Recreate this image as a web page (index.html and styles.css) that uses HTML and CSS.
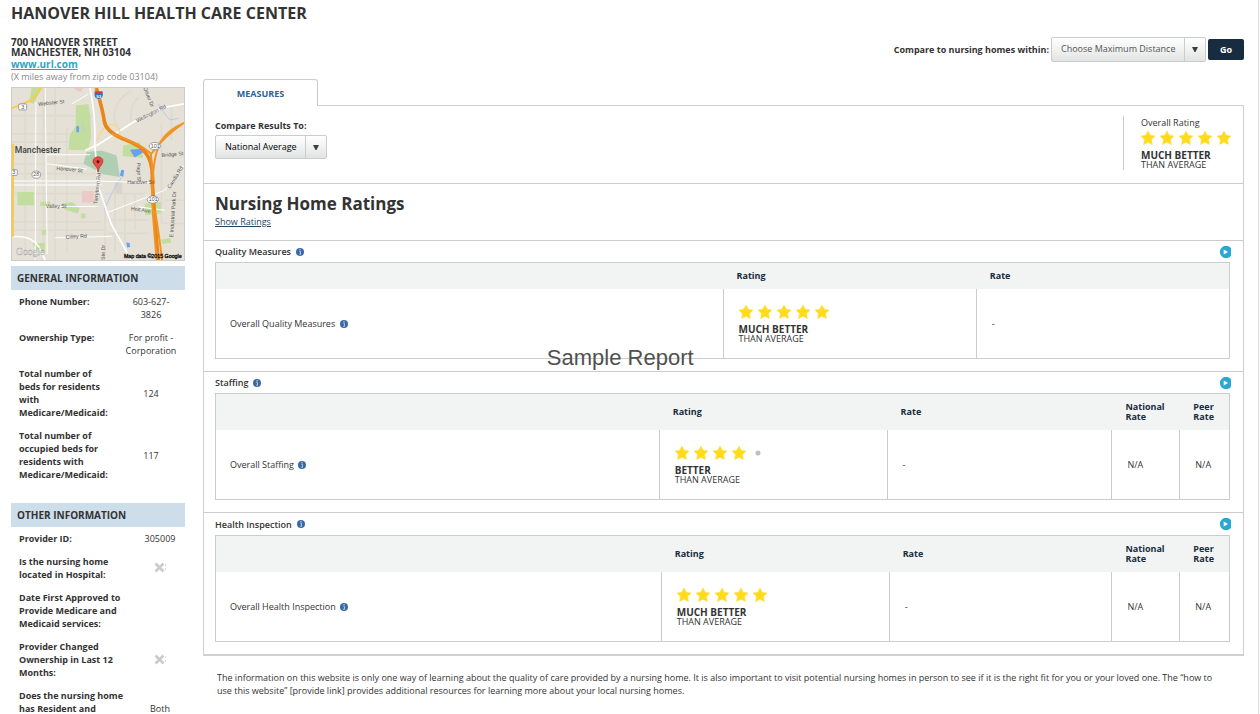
FILE: index.html
```html
<!DOCTYPE html>
<html lang="en">
<head>
<meta charset="utf-8">
<title>Hanover Hill Health Care Center</title>
<link rel="stylesheet" href="styles.css">
</head>
<body>
<svg class="defs" aria-hidden="true">
  <symbol id="star" viewBox="0 0 14 14"><path d="M7 0l2.200 4.200 4.800.8-3.400 3.500.8 5.100L7 11.300l-4.400 2.300.8-5.100L0 5l4.800-.8z" fill="#ffdb1c" stroke="#ffe14a" stroke-width=".6" stroke-linejoin="round"/></symbol>
  <symbol id="dot" viewBox="0 0 14 14"><circle cx="7" cy="7" r="2.500" fill="#bfbfbf"/></symbol>
  <symbol id="info" viewBox="0 0 8 8"><circle cx="4" cy="4" r="4" fill="#3b6aa3"/><path d="M3.200 3.300h1.300v2.700M3 6.200h2" stroke="#c5d8ea" stroke-width=".8" fill="none"/><circle cx="4" cy="1.800" r=".7" fill="#c5d8ea"/></symbol>
  <symbol id="play" viewBox="0 0 12 12"><path d="M12 2.200v7.600A6.200 6.200 0 1 1 12 2.200z" fill="#2aa8d2"/><path d="M4.700 3.500L9 6 4.700 8.500z" fill="#fff"/></symbol>
  <symbol id="cross" viewBox="0 0 12 12"><path d="M1.500 1.500l8 8m0-8l-8 8" stroke="#c9cbcc" stroke-width="2.600"/><path d="M11.500 2v2M11.500 6v2" stroke="#dcdcdc"/></symbol>
  <symbol id="arrow" viewBox="0 0 6 5"><path d="M0 0h6L3.500 5h-1z" fill="#3f3f3f"/></symbol>
</svg>
<div class="page">
  <h1 class="title">HANOVER HILL HEALTH CARE CENTER</h1>
  <div class="columns">
    <aside class="sidebar">
      <address class="address">700 HANOVER STREET<br>MANCHESTER, NH 03104</address>
      <a class="site" href="#">www.url.com</a>
      <p class="miles">(X miles away from zip code 03104)</p>
      <svg class="map" viewBox="20 12 518 518" role="img" aria-label="Map of Manchester">
        <rect x="20" y="12" width="518" height="518" fill="#e5e1d7"/>
        <g fill="none" stroke="#dedacf" stroke-width="5">
          <path d="M115 12v500M150 12v520M185 130v380M60 80v440M20 95h245M20 150h170M20 175h170M20 240h240M20 270h330M20 330h260M20 415h270M20 440h280M300 350v160M330 320v190M360 330v150M390 330v110M300 330h120M310 410h120M310 450h120M470 120v300M500 60v110M380 20q-40 20-50 60t20 60M400 40q-30 30-20 80M480 350h58M470 420h68"/>
        </g>
        <g fill="#c3dd9e">
          <path d="M79 12h32l-27 48-12-6zM212 65l38-5 6 40 2 60-8 40-60-2 4-45 18-25zM36 325h50v40H36zM105 355l30-2 3 13-33 2zM172 360l30-5 22 20-6 15-40-12zM228 390h13v15h-13zM420 360l48-5v35l-46 5zM470 468l26-4 4 14-28 4zM80 480l38-2 2 30h-18zM355 185l50-10 10 48-62-6zM110 440h14v15h-14z"/>
        </g>
        <path d="M245 205l45-5 45 15 10 65-50-8-60-32z" fill="#b0cfb2"/>
        <path d="M208 12h28l-10 12-12-4zM232 322h34v35h-36z" fill="#ebc9c9"/>
        <path d="M330 295h22v34h-25z" fill="#d8d4c9"/>
        <path d="M375 198l35-3 4 12-25 14zM214 126l8 2v17h-8zM349 258l9 2-3 19-10-3zM364 477l10 2 2 12-9 1z" fill="#68a1f4"/>
        <path d="M350 280l-25 40-28 60M232 120l5 28M460 60l20 30 15 18 26-4" fill="none" stroke="#b5caf2" stroke-width="3"/>
        <g fill="none" stroke="#fff">
          <path stroke-width="3" d="M20 292h260l160 6M92 55l-2 475M120 12l6 500M125 213h130M125 240l120 16M20 304h270M120 369h160M150 463l170-4M310 386l170-66 58-75M200 60l50-30M400 370l80 10"/>
          <path stroke-width="5" d="M255 12q18 90 14 170l12 130 38 110 60 108M20 460q60-6 80 30l20 40M240 200l40-18 110-70 90-42 58-10"/>
        </g>
        <path d="M277 170q10-36 34-46 18-6 30 12t-10 30" fill="none" stroke="#f6d899" stroke-width="5"/>
        <path d="M108 12L82 47 20 73M23 180v280" fill="none" stroke="#f7cc4b" stroke-width="6"/>
        <path d="M274 12q20 70 24 100t54 52q60 22 74 48 20 30 16 80l8 110 10 130" fill="none" stroke="#e8861c" stroke-width="11"/>
        <path d="M538 117q-50 22-70 56t-26 130q-2 60 14 227M320 150q90 30 118 60l10 90M538 117q-60 40-100 95M450 380q10 50 22 150" fill="none" stroke="#f29423" stroke-width="6"/>
        <g fill="#fff" stroke="#777" stroke-width="2">
          <rect x="40" y="60" width="24" height="18" rx="4"/><rect x="14" y="258" width="22" height="17" rx="3"/>
          <ellipse cx="93" cy="273" rx="13" ry="11"/><ellipse cx="450" cy="187" rx="17" ry="11"/><ellipse cx="444" cy="348" rx="17" ry="11"/>
        </g>
        <path d="M268 27q13-7 26 0 3 15-13 20-16-5-13-20z" fill="#3872b4" stroke="#fff"/>
        <path d="M269 22h24v6h-24z" fill="#c64040"/>
        <g class="map-labels">
          <text x="48" y="74">3</text><text x="21" y="272">3</text><text x="84" y="278">28</text><text x="438" y="192">101</text><text x="432" y="353">101</text>
          <text class="map-shield" x="274" y="41">93</text>
          <text transform="translate(100 66) rotate(-6)">Webster St</text>
          <text transform="translate(397 116) rotate(-27)">Wellington Rd</text>
          <text transform="translate(415 12) rotate(68)">Oliver Dr</text>
          <text transform="translate(153 259) rotate(5)">Hanover St</text>
          <text x="367" y="301">Hanover St</text><text x="122" y="373">Valley St</text>
          <text transform="translate(182 466) rotate(-3)">Cilley Rd</text>
          <text transform="translate(378 380) rotate(8)">Holt Ave</text>
          <text transform="translate(471 220) rotate(-5)">Bridge St</text>
          <text transform="translate(396 237) rotate(88)">Page St</text>
          <text transform="translate(496 316) rotate(-58)">Candia Rd</text>
          <text transform="translate(505 462) rotate(-86)">E Industrial Park Dr</text>
          <text transform="translate(277 362) rotate(-84)">Tarrytown Rd</text>
          <text transform="translate(299 530) rotate(-88)">Ste Dr</text>
        </g>
        <text class="map-city" x="28" y="209">Manchester</text>
        <text class="map-logo" x="32" y="514">Google</text>
        <text class="map-credit" x="357" y="525">Map data ©2015 Google</text>
        <path d="M279 266q-3-17-10-22-8-9-4-17 5-8 14-8t14 8q3 9-4 17-7 5-10 22z" fill="#e74c43" stroke="#a5271f" stroke-width="2"/>
        <circle cx="279" cy="234" r="4.500" fill="#4d120e"/>
      </svg>
      <h2 class="side-heading">GENERAL INFORMATION</h2>
      <dl class="facts">
        <div class="fact"><dt>Phone Number:</dt><dd>603-627-<br>3826</dd></div>
        <div class="fact"><dt>Ownership Type:</dt><dd>For profit -<br>Corporation</dd></div>
        <div class="fact"><dt>Total number of<br>beds for residents<br>with<br>Medicare/Medicaid:</dt><dd>124</dd></div>
        <div class="fact"><dt>Total number of<br>occupied beds for<br>residents with<br>Medicare/Medicaid:</dt><dd>117</dd></div>
      </dl>
      <h2 class="side-heading">OTHER INFORMATION</h2>
      <dl class="facts facts-other">
        <div class="fact"><dt>Provider ID:</dt><dd>305009</dd></div>
        <div class="fact"><dt>Is the nursing home<br>located in Hospital:</dt><dd><svg class="cross" role="img" aria-label="No"><use href="#cross"/></svg></dd></div>
        <div class="fact"><dt>Date First Approved to<br>Provide Medicare and<br>Medicaid services:</dt><dd></dd></div>
        <div class="fact"><dt>Provider Changed<br>Ownership in Last 12<br>Months:</dt><dd><svg class="cross" role="img" aria-label="No"><use href="#cross"/></svg></dd></div>
        <div class="fact fact-last"><dt>Does the nursing home<br>has Resident and</dt><dd>Both</dd></div>
      </dl>
    </aside>
    <main class="main">
      <form class="distance">
        <label for="distance">Compare to nursing homes within:</label>
        <span class="picker picker-distance">
          <select id="distance"><option>Choose Maximum Distance</option></select>
          <svg class="arrow"><use href="#arrow"/></svg>
        </span>
        <button class="go" type="button">Go</button>
      </form>
      <nav class="tabs"><a class="tab" href="#">MEASURES</a></nav>
      <div class="panel">
        <div class="compare">
          <div class="compare-to">
            <label for="average">Compare Results To:</label>
            <span class="picker">
              <select id="average"><option>National Average</option></select>
              <svg class="arrow"><use href="#arrow"/></svg>
            </span>
          </div>
          <div class="overall">
            <span>Overall Rating</span>
            <div class="stars"><svg><use href="#star"/></svg><svg><use href="#star"/></svg><svg><use href="#star"/></svg><svg><use href="#star"/></svg><svg><use href="#star"/></svg></div>
            <p class="verdict"><strong>MUCH BETTER</strong>THAN AVERAGE</p>
          </div>
        </div>
        <div class="ratings-title">
          <h2>Nursing Home Ratings</h2>
          <a href="#">Show Ratings</a>
        </div>
        <section class="measure">
          <header class="measure-head"><h3>Quality Measures</h3><svg class="info"><use href="#info"/></svg><button class="play" type="button" aria-label="Open Quality Measures"><svg><use href="#play"/></svg></button></header>
          <table class="quality">
            <colgroup><col class="c-name"><col class="c-rating"><col class="c-rate"></colgroup>
            <thead><tr><th></th><th>Rating</th><th>Rate</th></tr></thead>
            <tbody><tr>
              <td>Overall Quality Measures <svg class="info"><use href="#info"/></svg></td>
              <td><div class="stars"><svg><use href="#star"/></svg><svg><use href="#star"/></svg><svg><use href="#star"/></svg><svg><use href="#star"/></svg><svg><use href="#star"/></svg></div><p class="verdict"><strong>MUCH BETTER</strong>THAN AVERAGE</p></td>
              <td>-</td>
            </tr></tbody>
          </table>
          <span class="watermark">Sample Report</span>
        </section>
        <section class="measure">
          <header class="measure-head"><h3>Staffing</h3><svg class="info"><use href="#info"/></svg><button class="play" type="button" aria-label="Open Staffing"><svg><use href="#play"/></svg></button></header>
          <table class="staffing">
            <colgroup><col class="c-name"><col class="c-rating"><col class="c-rate"><col class="c-national"><col class="c-peer"></colgroup>
            <thead><tr><th></th><th>Rating</th><th>Rate</th><th>National<br>Rate</th><th>Peer<br>Rate</th></tr></thead>
            <tbody><tr>
              <td>Overall Staffing <svg class="info"><use href="#info"/></svg></td>
              <td><div class="stars"><svg><use href="#star"/></svg><svg><use href="#star"/></svg><svg><use href="#star"/></svg><svg><use href="#star"/></svg><svg><use href="#dot"/></svg></div><p class="verdict"><strong>BETTER</strong>THAN AVERAGE</p></td>
              <td>-</td><td>N/A</td><td>N/A</td>
            </tr></tbody>
          </table>
        </section>
        <section class="measure">
          <header class="measure-head"><h3>Health Inspection</h3><svg class="info"><use href="#info"/></svg><button class="play" type="button" aria-label="Open Health Inspection"><svg><use href="#play"/></svg></button></header>
          <table class="inspection">
            <colgroup><col class="c-name"><col class="c-rating"><col class="c-rate"><col class="c-national"><col class="c-peer"></colgroup>
            <thead><tr><th></th><th>Rating</th><th>Rate</th><th>National<br>Rate</th><th>Peer<br>Rate</th></tr></thead>
            <tbody><tr>
              <td>Overall Health Inspection <svg class="info"><use href="#info"/></svg></td>
              <td><div class="stars"><svg><use href="#star"/></svg><svg><use href="#star"/></svg><svg><use href="#star"/></svg><svg><use href="#star"/></svg><svg><use href="#star"/></svg></div><p class="verdict"><strong>MUCH BETTER</strong>THAN AVERAGE</p></td>
              <td>-</td><td>N/A</td><td>N/A</td>
            </tr></tbody>
          </table>
        </section>
      </div>
      <p class="note">The information on this website is only one way of learning about the quality of care provided by a nursing home. It is also important to visit potential nursing homes in person to see if it is the right fit for you or your loved one. The “how to use this website” [provide link] provides additional resources for learning more about your local nursing homes.</p>
    </main>
  </div>
</div>
</body>
</html>
```
FILE: styles.css
```css
* { box-sizing: border-box; }
body, h1, h2, h3, p, dl, dt, dd { margin: 0; }
body {
  background: #fff;
  color: #333;
  font: 9px/13px "Open Sans", "Noto Sans", sans-serif;
}
svg { display: block; }
.defs { position: absolute; width: 0; height: 0; }
.page {
  margin-right: 1px;
  padding: 2px 14px 0 11px;
  border-right: 1px solid #ddd;
}
.title { font-size: 16px; line-height: 22px; }
.columns {
  display: grid;
  grid-template-columns: 174px minmax(0, 1fr);
  column-gap: 18px;
  padding-top: 13px;
}

/* Sidebar */
.address { font-size: 10px; font-style: normal; font-weight: 700; line-height: 10px; }
.site { display: block; color: #2ba6cb; font-size: 10px; font-weight: 700; line-height: 14px; }
.miles { color: #888; line-height: 12px; }
.map { width: 100%; height: auto; margin: 4px 0 5px; border: 1px solid #ccc; }
.map-labels { font: 16px "Liberation Sans", sans-serif; fill: #555; }
.map-shield { font-size: 13px; font-weight: 700; fill: #fff; }
.map-city { font: 500 26px Roboto, sans-serif; fill: #444; }
.map-logo { font: 29px "Liberation Serif", serif; fill: #f8f8f8; stroke: #999; stroke-width: 1; }
.map-credit { font: 16px "Liberation Sans", sans-serif; fill: #111; stroke: #111; stroke-width: 1; }
.side-heading {
  padding: 0 6px;
  background: #cddde9;
  font-size: 10px;
  line-height: 24px;
}
.facts { padding-left: 8px; }
.facts + .side-heading { margin-top: 17px; }
.fact {
  display: grid;
  grid-template-columns: minmax(0, 1fr) 68px;
  padding: 5px 0;
}
.fact dt { font-weight: 700; white-space: nowrap; }
.fact dd { align-self: center; text-align: center; }
.facts-other .fact { grid-template-columns: minmax(0, 1fr) 50px; }
.facts .fact-last { padding-bottom: 0; }
.fact-last dd { align-self: end; }
.cross { width: 12px; height: 12px; margin: 0 auto; }

/* Controls */
.distance { display: flex; align-items: center; justify-content: flex-end; gap: 2px; height: 24px; }
.distance label, .compare-to label { font-weight: 700; }
.picker { display: inline-grid; align-items: center; }
.picker > * { grid-area: 1 / 1; }
.picker select {
  width: 112px;
  height: 24px;
  padding: 0 9px;
  appearance: none;
  border: 1px solid #ccc;
  border-radius: 2px;
  background:
    linear-gradient(#ccc, #ccc) right 20px top / 1px 100% no-repeat,
    linear-gradient(#fff, #e2e4e4);
  color: #000;
  font: 9px/22px "Open Sans", "Noto Sans", sans-serif;
}
.picker .arrow { justify-self: end; width: 6px; height: 5px; margin-right: 8px; pointer-events: none; }
.picker-distance select { width: 155px; height: 25px; color: #555; }
.go {
  width: 36px;
  height: 21px;
  padding: 0;
  border: 0;
  border-radius: 2px;
  background: #182c40;
  color: #fff;
  font: 700 9px/21px "Open Sans", "Noto Sans", sans-serif;
}

/* Tabs and panel */
.tabs { display: flex; margin-top: 18px; }
.tab {
  width: 115px;
  height: 27px;
  margin-bottom: -1px;
  border: 1px solid #ccc;
  border-bottom: 0;
  border-radius: 3px 3px 0 0;
  background: #fff;
  color: #2a6496;
  font-weight: 700;
  line-height: 27px;
  text-align: center;
  text-decoration: none;
  z-index: 1;
}
.panel { border: 1px solid #d0d0d0; border-bottom-width: 2px; }
.compare {
  display: flex;
  justify-content: space-between;
  padding: 10px 12px 13px 11px;
  border-bottom: 1px solid #ccc;
}
.compare-to { display: flex; flex-direction: column; align-items: flex-start; gap: 3px; padding-top: 3px; }
.overall { padding-bottom: 1px; padding-left: 17px; border-left: 1px solid #ccc; }
.overall span { display: block; margin-bottom: 2px; }
.stars { display: flex; gap: 5px; }
.stars svg { width: 14px; height: 14px; }
.verdict { padding-top: 6px; line-height: 9px; }
.verdict strong { display: block; font-size: 10px; }
.ratings-title { padding: 9px 11px 12px; border-bottom: 1px solid #ccc; }
.ratings-title h2 { font-size: 17px; line-height: 22px; }
.ratings-title a { display: block; color: #24435c; }

/* Measures */
.measure { position: relative; padding: 0 13px 12px 11px; border-bottom: 1px solid #ccc; }
.measure:last-child { border-bottom: 0; }
.measure-head { display: flex; align-items: center; height: 21px; }
.measure:last-child .measure-head { height: 22px; }
.measure-head h3 { font-size: 9px; font-weight: 600; }
.measure-head .info { margin-left: 5px; }
.info { display: inline-block; width: 8px; height: 8px; margin-left: 2px; vertical-align: -1px; }
.play { width: 12px; height: 12px; margin-left: auto; margin-right: -1px; padding: 0; border: 0; background: none; }
.play svg { width: 12px; height: 12px; }
table {
  width: 100%;
  border: 1px solid #ccc;
  border-spacing: 0;
  table-layout: fixed;
}
th {
  height: 36px;
  padding: 0 0 0 14px;
  background: #f2f4f4;
  color: #182c40;
  line-height: 10px;
  text-align: left;
}
.quality th { height: 26px; }
td { height: 69px; padding: 0 0 0 15px; border-left: 1px solid #ccc; }
td:first-child { padding-left: 14px; border-left: 0; }
.c-name { width: 50%; }
.c-rating, .c-rate { width: 25%; }
.staffing .c-name { width: 43.7%; }
.inspection .c-name { width: 43.9%; }
.staffing .c-rating, .inspection .c-rating { width: 22.5%; }
.staffing .c-rate { width: 22.2%; }
.inspection .c-rate { width: 22%; }
.c-national { width: 6.7%; }
.c-peer { width: 4.9%; }
.watermark {
  position: absolute;
  right: 0;
  bottom: 0;
  left: 33%;
  color: #505050;
  font: 22px/26px "Liberation Sans", sans-serif;
  pointer-events: none;
}
.note { padding: 15px 24px 0 14px; }
```
